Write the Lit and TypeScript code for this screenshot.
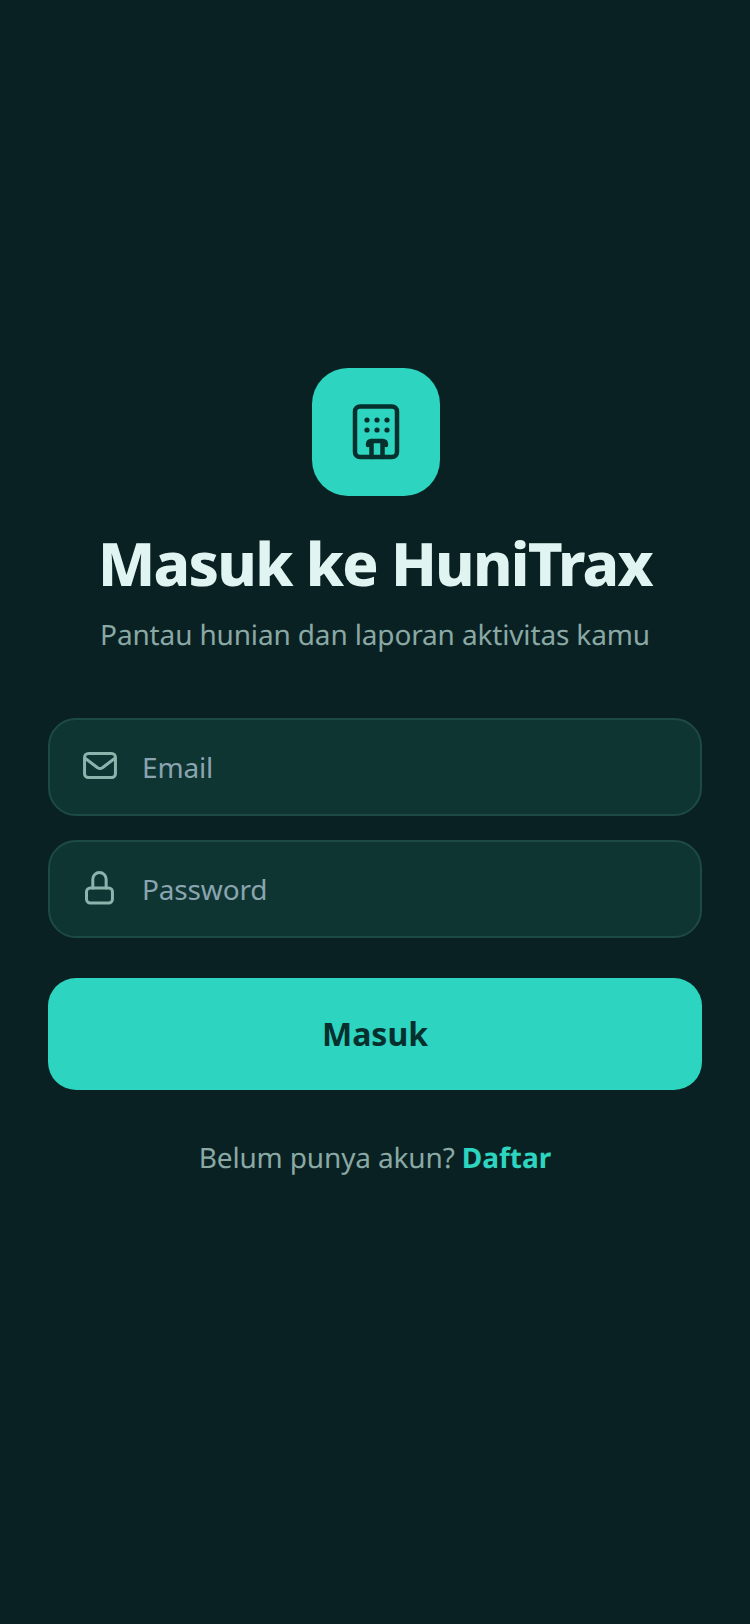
import { LitElement, html, css } from 'lit';
import { customElement } from 'lit/decorators.js';

@customElement('app-root')
export class AppRoot extends LitElement {
  static styles = css`
    :host {
      display: block;
      min-height: 1624px;
      background: #092122;
      font-family: 'Noto Sans', sans-serif;
      text-rendering: geometricPrecision;
    }
    .page {
      display: flex;
      flex-direction: column;
      align-items: center;
      padding: 368px 48px 0;
    }
    .logo {
      width: 128px;
      height: 128px;
      margin-left: 2px;
      border-radius: 36px;
      background: #2dd4bf;
      display: flex;
      align-items: center;
      justify-content: center;
    }
    h1 {
      margin: 25px 0 0;
      font-size: 60px;
      line-height: 84px;
      font-weight: 800;
      letter-spacing: -1.7px;
      color: #e0f5f1;
    }
    .sub {
      margin: 8px 0 0;
      font-size: 28px;
      line-height: 44px;
      letter-spacing: -0.15px;
      color: #8aa8a4;
    }
    form {
      width: 100%;
      margin-top: 61px;
      display: flex;
      flex-direction: column;
      gap: 24px;
    }
    .field {
      height: 98px;
      box-sizing: border-box;
      border: 2px solid #1d4a47;
      border-radius: 28px;
      background: #0f3533;
      display: flex;
      align-items: center;
      gap: 24px;
      padding: 0 32px;
    }
    .field svg {
      flex: none;
    }
    input {
      flex: 1;
      min-width: 0;
      border: 0;
      outline: 0;
      padding: 0;
      background: none;
      font: inherit;
      font-size: 28px;
      letter-spacing: -0.15px;
      color: #e0f5f1;
    }
    input::placeholder {
      color: #8aa4b0;
      opacity: 1;
    }
    button {
      height: 112px;
      margin-top: 16px;
      padding: 0 0 2px;
      border: 0;
      border-radius: 28px;
      background: #2dd4bf;
      color: #06302e;
      font: inherit;
      font-size: 32px;
      font-weight: 700;
    }
    .foot {
      margin: 46px 0 0;
      font-size: 28px;
      line-height: 44px;
      letter-spacing: -0.15px;
      color: #8aa8a4;
    }
    .foot a {
      color: #2dd4bf;
      font-weight: 700;
      letter-spacing: 0;
    }
  `;

  render() {
    return html`
      <div class="page">
        <div class="logo">
          <svg width="48" height="56" viewBox="0 0 48 56" fill="none" stroke="#06302e" stroke-width="4.5" stroke-linecap="round" stroke-linejoin="round">
            <rect x="3" y="2.5" width="42" height="50.5" rx="5" />
            <path d="M16 41q0-4 3.5-4h11q3.5 0 3.5 4" />
            <path d="M19.5 37v16M30.5 37v16" />
            <g fill="#06302e" stroke="none">
              <circle cx="15" cy="16" r="2.6" />
              <circle cx="25" cy="16" r="2.6" />
              <circle cx="35" cy="16" r="2.6" />
              <circle cx="15" cy="26" r="2.6" />
              <circle cx="25" cy="26" r="2.6" />
              <circle cx="35" cy="26" r="2.6" />
            </g>
          </svg>
        </div>
        <h1>Masuk ke HuniTrax</h1>
        <p class="sub">Pantau hunian dan laporan aktivitas kamu</p>
        <form>
          <label class="field">
            <svg width="36" height="36" viewBox="0 0 24 24" fill="none" stroke="#8db3ac" stroke-width="2" stroke-linecap="round" stroke-linejoin="round">
              <rect x="1.7" y="3" width="20.6" height="16" rx="2.5" />
              <path d="M2.5 6.5l7.9 6q1.6 1 3.2 0l7.9-6" />
            </svg>
            <input type="email" placeholder="Email" />
          </label>
          <label class="field">
            <svg width="36" height="36" viewBox="0 0 24 24" fill="none" stroke="#8db3ac" stroke-width="2" stroke-linecap="round" stroke-linejoin="round">
              <rect x="3" y="11.3" width="17.3" height="10" rx="2.5" />
              <path d="M7.2 11.3V5.5a4.45 4.45 0 0 1 8.9 0v5.8" />
            </svg>
            <input type="password" placeholder="Password" />
          </label>
          <button type="button">Masuk</button>
        </form>
        <p class="foot">Belum punya akun? <a>Daftar</a></p>
      </div>
    `;
  }
}
